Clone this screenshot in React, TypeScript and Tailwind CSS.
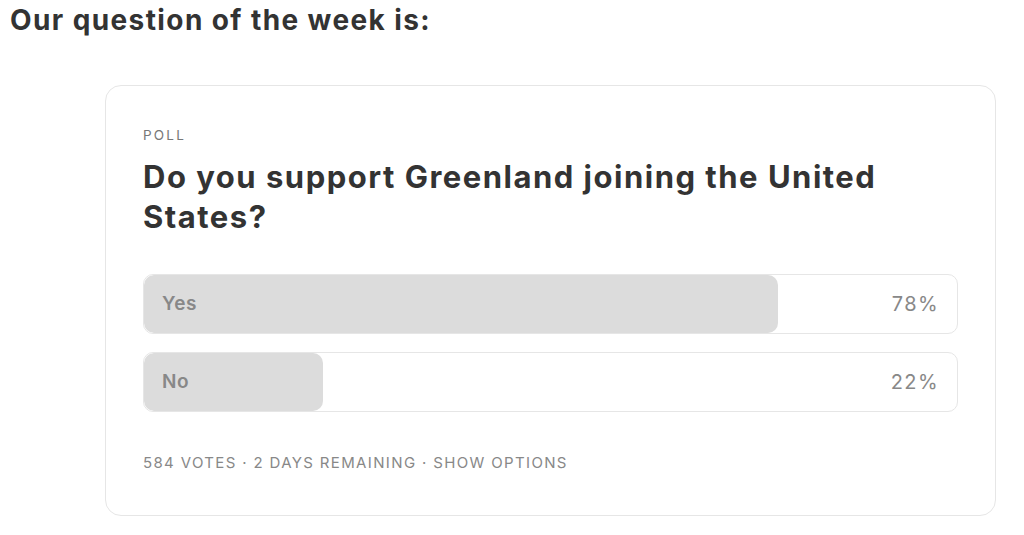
import React from 'react';

const options = [
  { label: 'Yes', pct: 78 },
  { label: 'No', pct: 22 },
];

export default function App() {
  return (
    <div className="w-[1024px] h-[535px] bg-white overflow-hidden font-['Inter',sans-serif]">
      <h1 className="pl-[10px] pt-[3px] text-[28px] leading-[34px] font-bold text-[#333] tracking-[1.4px]">
        Our question of the week is:
      </h1>
      <div className="ml-[105px] mt-[48px] w-[891px] h-[431px] rounded-[16px] border-[1.5px] border-[#e6e6e6] px-[37px] pt-[41px]">
        <div className="text-[13.5px] leading-[16px] tracking-[2.2px] text-[#777]">POLL</div>
        <div className="mt-[14px] text-[31px] leading-[40px] font-bold text-[#333] tracking-[1.5px]">
          Do you support Greenland joining the United States?
        </div>
        <div className="mt-[37px] flex flex-col gap-[18px]">
          {options.map(o => (
            <div key={o.label} className="relative h-[60px] rounded-[10px] border-[1.5px] border-[#e6e6e6] overflow-hidden">
              <div className="absolute inset-y-0 left-0 bg-[#dcdcdc] rounded-[10px]" style={{ width: `${o.pct}%` }} />
              <div className="relative h-full flex items-center justify-between pl-[18px] pr-[18px] text-[19px] text-[#888]">
                <span className="font-semibold tracking-[0.6px]">{o.label}</span>
                <span className="text-[20px] tracking-[1.4px]">{o.pct}%</span>
              </div>
            </div>
          ))}
        </div>
        <div className="mt-[42px] text-[15px] leading-[18px] tracking-[1.35px] text-[#888]">
          584 VOTES · 2 DAYS REMAINING · SHOW OPTIONS
        </div>
      </div>
    </div>
  );
}
